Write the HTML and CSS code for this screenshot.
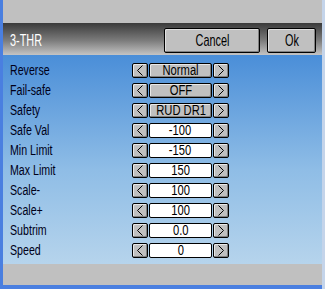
FILE: index.html
```html
<!DOCTYPE html>
<html>
    <head>
        <title>3-THR</title>
        <meta charset="UTF-8">
        <link rel="stylesheet" href="styles.css">
    </head>
    <body>
        <div class="ventana">
            <div class="barra"></div>
            <div class="cabecera">
                <span class="titulo"><span class="txt">3-THR</span></span>
                <button type="button" class="btn btn-cancel"><span class="txt">Cancel</span></button>
                <button type="button" class="btn btn-ok"><span class="txt">Ok</span></button>
            </div>
            <div class="cuerpo">
                <div class="fila"><span class="etiqueta"><span class="txt">Reverse</span></span><span class="flecha izq"></span><span class="valor"><span class="txt">Normal</span></span><span class="flecha der"></span></div>
                <div class="fila"><span class="etiqueta"><span class="txt">Fail-safe</span></span><span class="flecha izq"></span><span class="valor"><span class="txt">OFF</span></span><span class="flecha der"></span></div>
                <div class="fila"><span class="etiqueta"><span class="txt">Safety</span></span><span class="flecha izq"></span><span class="valor"><span class="txt">RUD DR1</span></span><span class="flecha der"></span></div>
                <div class="fila"><span class="etiqueta"><span class="txt">Safe Val</span></span><span class="flecha izq"></span><span class="valor num"><span class="txt">-100</span></span><span class="flecha der"></span></div>
                <div class="fila"><span class="etiqueta"><span class="txt">Min Limit</span></span><span class="flecha izq"></span><span class="valor num"><span class="txt">-150</span></span><span class="flecha der"></span></div>
                <div class="fila"><span class="etiqueta"><span class="txt">Max Limit</span></span><span class="flecha izq"></span><span class="valor num"><span class="txt">150</span></span><span class="flecha der"></span></div>
                <div class="fila"><span class="etiqueta"><span class="txt">Scale-</span></span><span class="flecha izq"></span><span class="valor num"><span class="txt">100</span></span><span class="flecha der"></span></div>
                <div class="fila"><span class="etiqueta"><span class="txt">Scale+</span></span><span class="flecha izq"></span><span class="valor num"><span class="txt">100</span></span><span class="flecha der"></span></div>
                <div class="fila"><span class="etiqueta"><span class="txt">Subtrim</span></span><span class="flecha izq"></span><span class="valor num"><span class="txt">0.0</span></span><span class="flecha der"></span></div>
                <div class="fila"><span class="etiqueta"><span class="txt">Speed</span></span><span class="flecha izq"></span><span class="valor num"><span class="txt">0</span></span><span class="flecha der"></span></div>
            </div>
            <div class="pie"></div>
        </div>
    </body>
</html>
```

FILE: styles.css
```css
body{
    margin: 0;
    font-family: "Liberation Sans", Arial, sans-serif;
}
.txt{
    display: inline-block;
    transform: scaleX(0.8);
    white-space: nowrap;
}
.ventana{
    width: 325px;
    height: 289px;
    box-sizing: border-box;
    background: #4a7fe0;
    border-right: 3px solid #c4d4ea;
    padding: 0 0 4px 3px;
    display: flex;
    flex-direction: column;
}
.barra{
    height: 23px;
    background: #c0c0c0;
}
.cabecera{
    height: 32px;
    background: linear-gradient(#3a3a3a, #7c7c7c 55%, #c4c4c4);
    display: flex;
    align-items: center;
    padding: 0 6px 0 7px;
}
.titulo{
    color: #ffffff;
    font-size: 16px;
    flex: 1;
    padding-top: 3px;
}
.titulo .txt{
    transform-origin: left center;
    transform: scaleX(0.68);
}
.btn{
    height: 25px;
    margin-top: 3px;
    background: #c0c0c0;
    border: 1px solid #000000;
    border-radius: 2px;
    box-shadow: inset -1px -1px 0 #808080, inset 1px 1px 0 #e0e0e0;
    font-family: inherit;
    font-size: 17px;
    color: #000000;
    padding: 0;
}
.btn .txt{
    transform: scaleX(0.64);
}
.btn-cancel{
    width: 96px;
    margin-right: 7px;
}
.btn-ok{
    width: 49px;
}
.cuerpo{
    flex: 1;
    background: linear-gradient(#4a8ed8, #8fbde6 55%, #b6d4ec);
    padding: 8px 0 0 7px;
}
.fila{
    height: 20px;
    display: flex;
    align-items: flex-start;
}
.etiqueta{
    width: 122px;
    font-size: 14px;
    line-height: 15px;
    color: #000018;
}
.etiqueta .txt{
    transform-origin: left center;
    transform: scaleX(0.76);
}
.flecha, .valor{
    height: 15px;
    box-sizing: border-box;
    border: 1px solid #000000;
    border-radius: 2px;
    background: #c0c0c0;
    box-shadow: inset -1px -1px 0 #808080, inset 1px 1px 0 #e8e8e8;
    font-size: 14px;
    line-height: 13px;
    text-align: center;
    color: #000000;
}
.flecha{
    width: 16px;
    background-repeat: no-repeat;
    background-position: center;
}
.izq{
    background-image: url("data:image/svg+xml,%3Csvg xmlns='http://www.w3.org/2000/svg' width='8' height='11'%3E%3Cpolyline points='6.5,0.5 1.5,5.5 6.5,10.5' fill='none' stroke='%23000' stroke-width='1'/%3E%3C/svg%3E");
}
.der{
    background-image: url("data:image/svg+xml,%3Csvg xmlns='http://www.w3.org/2000/svg' width='8' height='11'%3E%3Cpolyline points='1.5,0.5 6.5,5.5 1.5,10.5' fill='none' stroke='%23000' stroke-width='1'/%3E%3C/svg%3E");
}
.valor{
    width: 63px;
    margin: 0 1px;
}
.num{
    background: #ffffff;
    box-shadow: none;
}
.pie{
    height: 21px;
    background: #c0c0c0;
}
```
